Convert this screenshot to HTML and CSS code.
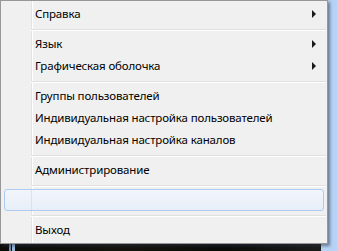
FILE: index.html
```html
<!DOCTYPE html>
<html>
<head>
<meta charset="utf-8">
<link rel="stylesheet" href="styles.css">
</head>
<body>
<div class="screen">
  <div class="menu">
    <div class="item sub">Справка</div>
    <div class="sep"></div>
    <div class="item sub">Язык</div>
    <div class="item sub">Графическая оболочка</div>
    <div class="sep"></div>
    <div class="item">Группы пользователей</div>
    <div class="item">Индивидуальная настройка пользователей</div>
    <div class="item">Индивидуальная настройка каналов</div>
    <div class="sep"></div>
    <div class="item">Администрирование</div>
    <div class="sep"></div>
    <div class="item hover"></div>
    <div class="sep"></div>
    <div class="item">Выход</div>
  </div>
  <div class="strip"></div>
</div>
</body>
</html>
```

FILE: styles.css
```css
html, body {
  margin: 0;
  padding: 0;
}
body {
  width: 337px;
  height: 251px;
  overflow: hidden;
  background: #b6d3f6;
}
.screen {
  width: 337px;
  height: 251px;
  display: flex;
  flex-direction: column;
  background: #b6d3f6;
}
.menu {
  width: 328px;
  height: 244px;
  box-sizing: border-box;
  border: 1px solid #979797;
  background:
    linear-gradient(to right, transparent 30px, #e2e3e3 30px, #e2e3e3 31px, #ffffff 31px, #ffffff 32px, transparent 32px),
    #f0f0f0;
  box-shadow: 2px 2px 3px rgba(40, 50, 70, 0.55);
  padding: 2px;
  display: flex;
  flex-direction: column;
  font-family: "Noto Sans", "Open Sans", sans-serif;
  font-size: 11.5px;
  letter-spacing: -0.15px;
  color: #000;
  position: relative;
  z-index: 1;
}
.item {
  height: 22px;
  line-height: 22px;
  padding-left: 32px;
  position: relative;
  flex: none;
  white-space: nowrap;
}
.sub::after {
  content: "";
  position: absolute;
  right: 9px;
  top: 7px;
  border-left: 4px solid #1a1a1a;
  border-top: 4px solid transparent;
  border-bottom: 4px solid transparent;
}
.sep {
  height: 8px;
  flex: none;
  box-sizing: border-box;
  padding-top: 4px;
  margin-left: 28px;
  margin-right: -1px;
}
.sep::before {
  content: "";
  display: block;
  height: 1px;
  background: #e0e0e0;
  border-bottom: 1px solid #ffffff;
}
.hover {
  margin-left: 1px;
  box-sizing: border-box;
  border: 1px solid #aecbf0;
  border-radius: 3px;
  background: linear-gradient(to bottom, #f2f5fb, #e8eef8);
  width: 320px;
}
.hover::before {
  content: "";
  position: absolute;
  left: 26px;
  top: 0;
  bottom: 0;
  width: 1px;
  background: rgba(210, 215, 225, 0.6);
}
.strip {
  width: 321px;
  height: 7px;
  flex: none;
  background:
    linear-gradient(to right, transparent 9px, #6f8fb0 9px, #6f8fb0 11px, transparent 11px, transparent 12px, #9fb8d8 12px, #9fb8d8 15px, transparent 15px),
    linear-gradient(to right, #0b0b08, #14140c 40%, #0a0a08 70%, #1c1c1c);
}
```
